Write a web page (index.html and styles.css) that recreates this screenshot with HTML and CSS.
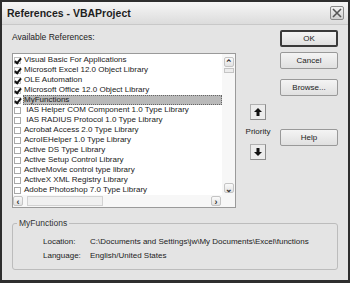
FILE: index.html
```html
<!DOCTYPE html>
<html lang="en">
<head>
    <meta charset="UTF-8">
    <title>References - VBAProject</title>
    <link rel="stylesheet" href="styles.css">
</head>
<body>
    <div class="window">
        <div class="titlebar">
            <span class="title">References - VBAProject</span>
            <span class="close-btn">
                <svg width="12" height="12" viewBox="0 0 12 12"><path d="M2 2 L10 10 M10 2 L2 10" stroke="#555" stroke-width="1.6" fill="none"/></svg>
            </span>
        </div>

        <div class="main">
            <div class="left">
                <div class="label">Available References:</div>
                <div class="listbox">
                    <div class="rows">
                        <div class="row"><span class="box checked"></span>Visual Basic For Applications</div>
                        <div class="row"><span class="box checked"></span>Microsoft Excel 12.0 Object Library</div>
                        <div class="row"><span class="box checked"></span>OLE Automation</div>
                        <div class="row"><span class="box checked"></span>Microsoft Office 12.0 Object Library</div>
                        <div class="row selected"><span class="box checked"></span><span class="sel">MyFunctions</span></div>
                        <div class="row"><span class="box"></span>&nbsp;IAS Helper COM Component 1.0 Type Library</div>
                        <div class="row"><span class="box"></span>&nbsp;IAS RADIUS Protocol 1.0 Type Library</div>
                        <div class="row"><span class="box"></span>Acrobat Access 2.0 Type Library</div>
                        <div class="row"><span class="box"></span>AcroIEHelper 1.0 Type Library</div>
                        <div class="row"><span class="box"></span>Active DS Type Library</div>
                        <div class="row"><span class="box"></span>Active Setup Control Library</div>
                        <div class="row"><span class="box"></span>ActiveMovie control type library</div>
                        <div class="row"><span class="box"></span>ActiveX XML Registry Library</div>
                        <div class="row"><span class="box"></span>Adobe Photoshop 7.0 Type Library</div>
                    </div>
                    <div class="vscroll">
                        <span class="sbtn">&#8963;</span>
                        <span class="vthumb"></span>
                        <span class="vspace"></span>
                        <span class="sbtn">&#8964;</span>
                    </div>
                    <div class="hscroll">
                        <span class="sbtn">&#8249;</span>
                        <span class="hthumb"></span>
                        <span class="hspace"></span>
                        <span class="sbtn">&#8250;</span>
                    </div>
                    <div class="corner"></div>
                </div>
            </div>

            <div class="priority">
                <span class="arrow-btn">
                    <svg width="8" height="8" viewBox="0 0 8 8"><path d="M4 0 L8 4 L5.5 4 L5.5 8 L2.5 8 L2.5 4 L0 4 Z" fill="#111"/></svg>
                </span>
                <span class="priority-label">Priority</span>
                <span class="arrow-btn">
                    <svg width="8" height="8" viewBox="0 0 8 8"><path d="M4 8 L8 4 L5.5 4 L5.5 0 L2.5 0 L2.5 4 L0 4 Z" fill="#111"/></svg>
                </span>
            </div>

            <div class="buttons">
                <button class="btn default">OK</button>
                <button class="btn">Cancel</button>
                <button class="btn browse">Browse...</button>
                <button class="btn help">Help</button>
            </div>
        </div>

        <fieldset class="group">
            <legend>MyFunctions</legend>
            <div class="info"><span class="info-key">Location:</span><span>C:\Documents and Settings\jw\My Documents\Excel\functions</span></div>
            <div class="info"><span class="info-key">Language:</span><span>English/United States</span></div>
        </fieldset>
    </div>
</body>
</html>
```

FILE: styles.css
```css
body {
    margin: 0;
    font-family: "Liberation Sans", Arial, sans-serif;
    color: #222;
}

.window {
    width: 350px;
    height: 283px;
    box-sizing: border-box;
    border: 2px solid #2e2e2e;
    border-bottom-width: 3px;
    background-color: #e4e4e4;
    overflow: hidden;
}

.titlebar {
    height: 23px;
    display: flex;
    align-items: center;
    justify-content: space-between;
    padding: 0 4px 0 5px;
    background: linear-gradient(#f6f6f6, #dcdcdc);
    border-bottom: 1px solid #c8c8c8;
    box-sizing: border-box;
}

.title {
    font-size: 10.5px;
    font-weight: bold;
    color: #1e1e1e;
}

.close-btn {
    width: 14px;
    height: 14px;
    border: 1px solid #8a8a8a;
    border-radius: 2px;
    background: linear-gradient(#f2f2f2, #cfcfcf);
    display: flex;
    align-items: center;
    justify-content: center;
    box-sizing: border-box;
}

.main {
    display: flex;
    padding-left: 10px;
}

.left {
    width: 224px;
}

.label {
    font-size: 8.5px;
    height: 12px;
    line-height: 12px;
    margin-top: 6px;
}

/* list box */
.listbox {
    margin-top: 10px;
    height: 155px;
    box-sizing: border-box;
    border: 1px solid #9a9a9a;
    background-color: #fff;
    display: grid;
    grid-template-columns: 1fr 13px;
    grid-template-rows: 1fr 12px;
}

.rows {
    padding-top: 1px;
    overflow: hidden;
}

.row {
    height: 10px;
    line-height: 10px;
    font-size: 8px;
    white-space: nowrap;
    display: flex;
    align-items: center;
    padding-left: 1px;
}

.box {
    width: 7px;
    height: 7px;
    border: 1px solid #a8a8a8;
    box-sizing: border-box;
    margin-right: 3px;
    flex: none;
    position: relative;
}

.box.checked {
    border-color: #c0c0c0;
}

.box.checked::after {
    content: "";
    position: absolute;
    left: 1px;
    top: -1px;
    width: 2px;
    height: 5px;
    border: solid #111;
    border-width: 0 2px 2px 0;
    transform: rotate(40deg);
}

.selected .sel {
    flex: 1;
    background-color: #b9b9b9;
    outline: 1px dotted #666;
    outline-offset: -1px;
    margin-left: -1px;
    padding-left: 1px;
}

.vscroll {
    display: flex;
    flex-direction: column;
    align-items: center;
    background-color: #f7f7f7;
    padding-top: 3px;
    padding-bottom: 2px;
}

.hscroll {
    display: flex;
    align-items: center;
    background-color: #f7f7f7;
    padding-right: 1px;
}

.corner {
    background-color: #f7f7f7;
}

.sbtn {
    width: 10px;
    height: 10px;
    border: 1px solid #c4c4c4;
    border-radius: 2px;
    background: linear-gradient(#fafafa, #e2e2e2);
    box-sizing: border-box;
    font-size: 9px;
    line-height: 10px;
    text-align: center;
    font-weight: bold;
    color: #333;
    flex: none;
}

.vthumb {
    width: 10px;
    height: 5px;
    border: 1px solid #c4c4c4;
    box-sizing: border-box;
    background-color: #ececec;
    margin-top: 1px;
}

.vspace, .hspace {
    flex: 1;
}

.hthumb {
    width: 76px;
    height: 10px;
    margin-left: 4px;
    border: 1px solid #d2d2d2;
    box-sizing: border-box;
    background-color: #f0f0f0;
}

/* priority arrows */
.priority {
    width: 44px;
    display: flex;
    flex-direction: column;
    align-items: center;
    padding-top: 79px;
}

.arrow-btn {
    width: 16px;
    height: 16px;
    box-sizing: border-box;
    border: 1px solid #b0b0b0;
    border-right-color: #8c8c8c;
    border-bottom-color: #8c8c8c;
    background-color: #ececec;
    display: flex;
    align-items: center;
    justify-content: center;
}

.priority-label {
    font-size: 8px;
    line-height: 10px;
    margin: 7px 0 7px;
}

/* command buttons */
.buttons {
    display: flex;
    flex-direction: column;
    padding-top: 5px;
}

.btn {
    width: 58px;
    height: 17px;
    box-sizing: border-box;
    border: 1px solid #999;
    border-radius: 2px;
    background: linear-gradient(#f4f4f4, #e0e0e0);
    font-family: "Liberation Sans", Arial, sans-serif;
    font-size: 8px;
    color: #222;
    padding: 0;
    margin-bottom: 5px;
}

.btn.default {
    border: 2px solid #3a3a3a;
}

.btn.browse {
    margin-top: 5px;
}

.btn.help {
    margin-top: 28px;
}

/* MyFunctions group */
.group {
    margin: 10px 10px 0 10px;
    padding: 7px 0 6px 30px;
    border: 1px solid #bcbcbc;
    border-radius: 3px;
    font-size: 8px;
    height: 52px;
    box-sizing: border-box;
}

.group legend {
    padding: 0 2px;
    margin-left: -26px;
    font-size: 8.5px;
    color: #333;
}

.info {
    height: 14px;
    line-height: 14px;
    display: flex;
    white-space: nowrap;
}

.info-key {
    width: 47px;
}
```
